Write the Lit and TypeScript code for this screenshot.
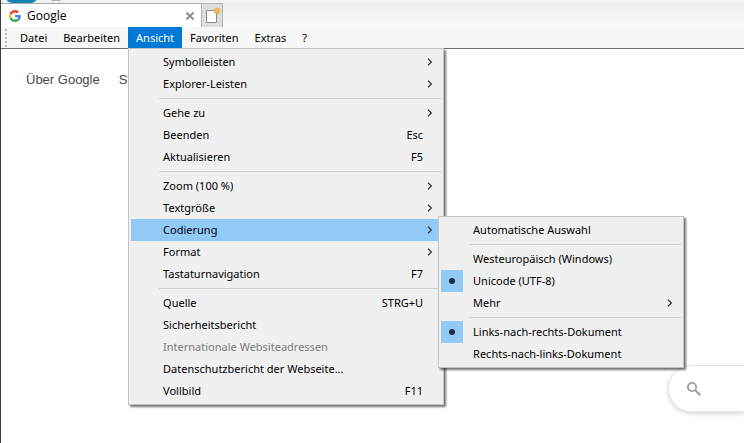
import { LitElement, html, css, svg, nothing } from "lit";
import { customElement, property } from "lit/decorators.js";
import { classMap } from "lit/directives/class-map.js";

interface MenuEntry {
  label?: string;
  shortcut?: string;
  disabled?: boolean;
  active?: boolean;
  checked?: boolean;
  more?: boolean;
  submenu?: MenuEntry[];
  separator?: boolean;
}

const SEP: MenuEntry = { separator: true };

const ENCODING: MenuEntry[] = [
  { label: "Automatische Auswahl" },
  SEP,
  { label: "Westeuropäisch (Windows)" },
  { label: "Unicode (UTF-8)", checked: true },
  { label: "Mehr", more: true },
  SEP,
  { label: "Links-nach-rechts-Dokument", checked: true },
  { label: "Rechts-nach-links-Dokument" },
];

const VIEW: MenuEntry[] = [
  { label: "Symbolleisten", more: true },
  { label: "Explorer-Leisten", more: true },
  SEP,
  { label: "Gehe zu", more: true },
  { label: "Beenden", shortcut: "Esc" },
  { label: "Aktualisieren", shortcut: "F5" },
  SEP,
  { label: "Zoom (100 %)", more: true },
  { label: "Textgröße", more: true },
  { label: "Codierung", more: true, active: true, submenu: ENCODING },
  { label: "Format", more: true },
  { label: "Tastaturnavigation", shortcut: "F7" },
  SEP,
  { label: "Quelle", shortcut: "STRG+U" },
  { label: "Sicherheitsbericht" },
  { label: "Internationale Websiteadressen", disabled: true },
  { label: "Datenschutzbericht der Webseite..." },
  { label: "Vollbild", shortcut: "F11" },
];

@customElement("popup-menu")
export class PopupMenu extends LitElement {
  @property({ attribute: false }) entries: MenuEntry[] = [];

  static styles = css`
    :host {
      display: block;
      box-sizing: border-box;
      padding: 2px;
      border: 1px solid #c4c4c4;
      background: #f0f0f0;
      box-shadow: 2px 2px 2px rgba(0, 0, 0, 0.55);
      color: #000;
    }
    .row {
      position: relative;
    }
    .item {
      display: grid;
      grid-template-columns: 22px 1fr auto 18px;
      align-items: center;
      width: 100%;
      height: 22px;
      padding: 0;
      border: 0;
      background: none;
      color: inherit;
      font: inherit;
      text-align: left;
      white-space: nowrap;
    }
    .item.active {
      background: #91c9f7;
    }
    .item:disabled {
      color: #7a7a7a;
    }
    .mark {
      display: grid;
      place-items: center;
      height: 22px;
    }
    .mark.checked {
      background: #91c9f7;
    }
    .dot {
      width: 6px;
      height: 6px;
      border-radius: 50%;
      background: #1f2f3d;
    }
    .label {
      padding-left: 10px;
    }
    .arrow {
      display: block;
      width: 6px;
      height: 8px;
      margin-left: 4px;
    }
    .separator {
      height: 1px;
      margin: 3px 0 3px 28px;
      border: 0;
      background: #d0d0d0;
    }
    .flyout {
      position: absolute;
      z-index: 1;
      top: -3px;
      left: calc(100% - 3px);
      width: 246px;
    }
  `;

  private renderEntry(e: MenuEntry): unknown {
    if (e.separator) return html`<hr class="separator" />`;
    return html`
      <div class="row">
        <button
          class=${classMap({ item: true, active: !!e.active })}
          role=${e.checked ? "menuitemradio" : "menuitem"}
          aria-checked=${e.checked ? "true" : nothing}
          aria-haspopup=${e.more ? "menu" : nothing}
          ?disabled=${e.disabled}
        >
          <span class=${classMap({ mark: true, checked: !!e.checked })}>
            ${e.checked ? html`<span class="dot"></span>` : nothing}
          </span>
          <span class="label">${e.label}</span>
          <span>${e.shortcut ?? ""}</span>
          ${e.more
            ? html`<svg class="arrow" viewBox="0 0 6 8">
                <path d="M1 .7 4.4 4 1 7.3" fill="none" stroke="#333" stroke-width="1.2" />
              </svg>`
            : html`<span></span>`}
        </button>
        ${e.submenu
          ? html`<popup-menu class="flyout" role="menu" .entries=${e.submenu}></popup-menu>`
          : nothing}
      </div>
    `;
  }

  render() {
    return this.entries.map((e) => this.renderEntry(e));
  }
}

const rays = [0, 45, 90, 135].map(
  (a) => svg`<path d="M15 1.5v7" transform="rotate(${a} 15 5)" stroke="#f0a030" stroke-width="1.2" />`
);

@customElement("app-root")
export class AppRoot extends LitElement {
  static styles = css`
    :host {
      display: flex;
      flex-direction: column;
      box-sizing: border-box;
      height: 100vh;
      overflow: hidden;
      border-left: 1px solid #3c3c3c;
      background: #fff;
      color: #000;
      font: 11px/16px "Noto Sans", "Open Sans", sans-serif;
    }
    button {
      padding: 0;
      border: 0;
      background: none;
      color: inherit;
      font: inherit;
    }
    .toolbar {
      display: flex;
      gap: 15px;
      height: 3px;
      padding-left: 6px;
      overflow: hidden;
      background: #f2f2f2;
    }
    .nav {
      flex: none;
      width: 29px;
      height: 3px;
      border-radius: 0 0 6px 6px / 0 0 3px 3px;
      background: #1683b5;
    }
    .nav.small {
      width: 10px;
      height: 1px;
      background: #b0b0b0;
    }
    .tabs {
      display: flex;
      height: 24px;
      background: linear-gradient(#ececec, #fbfbfb);
    }
    .tab {
      display: flex;
      align-items: center;
      box-sizing: border-box;
      width: 200px;
      padding: 0 6px 0 8px;
      border-top: 1px solid #a8a8a8;
      background: #fff;
      font: 12px/16px "Open Sans", "Noto Sans", sans-serif;
    }
    .tab-title {
      flex: 1;
      padding-left: 6px;
    }
    .logo {
      width: 12px;
      height: 12px;
    }
    .close,
    .close svg {
      display: block;
      width: 10px;
      height: 10px;
    }
    .new-tab {
      display: grid;
      place-items: center;
      box-sizing: border-box;
      width: 22px;
      border: 1px solid #b4b4b4;
      border-bottom: 0;
      background: #dedede;
    }
    .new-tab svg {
      width: 20px;
      height: 20px;
    }
    .menubar {
      display: flex;
      height: 21px;
      border-bottom: 1px solid #6e6e6e;
      background: #f7f7f7;
    }
    .grip {
      width: 2px;
      margin: 2px 5px 0 4px;
      background: repeating-linear-gradient(#b4b4b4 0 2px, transparent 2px 4px);
    }
    .menu {
      position: relative;
      display: flex;
    }
    .menu > button {
      padding: 0 8px;
    }
    .menu.open > button {
      background: #0078d7;
      color: #fff;
    }
    .dropdown {
      position: absolute;
      z-index: 1;
      top: 100%;
      left: 0;
      width: 316px;
    }
    .page {
      display: flex;
      flex: 1;
      flex-direction: column;
      justify-content: space-between;
      padding: 23px 0 31px 25px;
      font: 13px/16px "Liberation Sans", Arial, sans-serif;
    }
    .links {
      display: flex;
      gap: 19px;
    }
    .links a {
      color: #484848;
      text-decoration: none;
    }
    .search {
      display: flex;
      align-items: center;
      align-self: flex-end;
      box-sizing: border-box;
      width: 76px;
      height: 47px;
      padding-left: 17px;
      border: 1px solid #e6e6e6;
      border-right: 0;
      border-radius: 24px 0 0 24px;
      box-shadow: 0 2px 4px rgba(0, 0, 0, 0.16);
    }
    .search svg {
      flex: none;
      width: 16px;
      height: 16px;
    }
    .search input {
      flex: 1;
      min-width: 0;
      border: 0;
      outline: 0;
      background: none;
      font: inherit;
    }
  `;

  private renderMenu(label: string) {
    const open = label === "Ansicht";
    return html`
      <div class=${classMap({ menu: true, open })}>
        <button aria-haspopup="menu" aria-expanded=${open}>${label}</button>
        ${open
          ? html`<popup-menu class="dropdown" role="menu" .entries=${VIEW}></popup-menu>`
          : nothing}
      </div>
    `;
  }

  render() {
    return html`
      <div class="toolbar"><span class="nav"></span><span class="nav small"></span></div>
      <div class="tabs">
        <div class="tab">
          <svg class="logo" viewBox="0 0 48 48">
            <path fill="#EA4335" d="M24 9.5c3.54 0 6.71 1.22 9.21 3.6l6.85-6.85C35.9 2.38 30.47 0 24 0 14.62 0 6.51 5.38 2.56 13.22l7.98 6.19C12.43 13.72 17.74 9.5 24 9.5z" />
            <path fill="#4285F4" d="M46.98 24.55c0-1.57-.15-3.09-.38-4.55H24v9.02h12.94c-.58 2.96-2.26 5.48-4.78 7.18l7.73 6c4.51-4.18 7.09-10.36 7.09-17.65z" />
            <path fill="#FBBC05" d="M10.53 28.59A14.5 14.5 0 0 1 9.77 24c0-1.6.27-3.14.76-4.59l-7.98-6.19A23.9 23.9 0 0 0 0 24c0 3.88.92 7.54 2.56 10.78l7.97-6.19z" />
            <path fill="#34A853" d="M24 48c6.48 0 11.93-2.13 15.89-5.81l-7.73-6c-2.15 1.45-4.92 2.3-8.16 2.3-6.26 0-11.57-4.22-13.47-9.91l-7.98 6.19C6.51 42.62 14.62 48 24 48z" />
          </svg>
          <span class="tab-title">Google</span>
          <button class="close" aria-label="Tab schließen">
            <svg viewBox="0 0 10 10"><path d="M1.5 1.5 8.5 8.5M8.5 1.5 1.5 8.5" stroke="#8c8c8c" stroke-width="1.8" /></svg>
          </button>
        </div>
        <button class="new-tab" aria-label="Neuer Tab">
          <svg viewBox="0 0 20 20">
            <path d="M4.5 4.5h10v12h-10z" fill="#fff" stroke="#8a8a8a" />
            ${rays}
            <circle cx="15" cy="5" r="2" fill="#f7b94d" />
          </svg>
        </button>
      </div>
      <nav class="menubar">
        <span class="grip"></span>
        ${["Datei", "Bearbeiten", "Ansicht", "Favoriten", "Extras", "?"].map((m) => this.renderMenu(m))}
      </nav>
      <main class="page">
        <div class="links"><a href="#about">Über Google</a><a href="#store">Store</a></div>
        <label class="search">
          <svg viewBox="0 0 16 16" fill="none" stroke="#9aa0a6">
            <circle cx="6" cy="6" r="4.2" stroke-width="1.7" />
            <path d="M9.2 9.2 14.3 14.3" stroke-width="2" />
          </svg>
          <input type="text" aria-label="Suche" />
        </label>
      </main>
    `;
  }
}
